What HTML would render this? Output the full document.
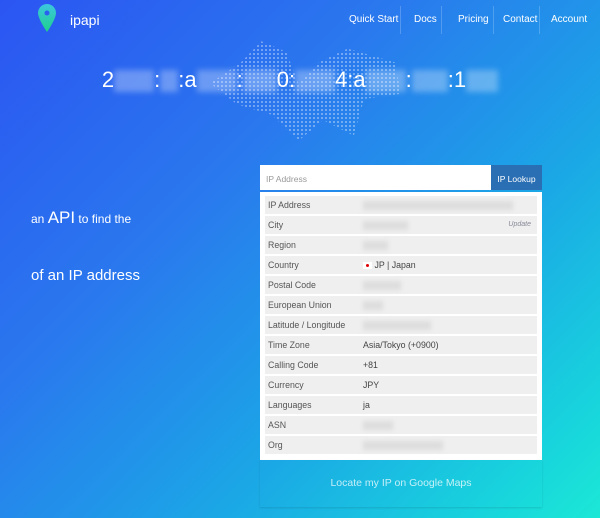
<!DOCTYPE html><html><head><style>
*{margin:0;padding:0;box-sizing:border-box}
body{width:600px;height:518px;overflow:hidden;font-family:"Liberation Sans",sans-serif;background:linear-gradient(135deg,#2b55f2 0%,#2a78ee 35%,#1ba6e6 65%,#18d6dc 90%,#1ce8d6 100%);position:relative;color:#fff}
.a{position:absolute}
.nav a{position:absolute;top:14px;font-size:10px;color:#fff;text-decoration:none}
.sep{position:absolute;top:6px;width:1px;height:28px;background:rgba(255,255,255,.2)}
.map{left:200px;top:36px;width:205px;height:105px;background-image:radial-gradient(circle,rgba(255,255,255,.4) 0.9px,transparent 1.2px);background-size:4px 4px;clip-path:polygon(5% 45%,20% 25%,30% 5%,42% 15%,48% 45%,58% 25%,72% 12%,95% 25%,98% 55%,80% 60%,75% 95%,60% 80%,48% 100%,35% 75%,18% 65%)}
.ip{left:0;width:600px;top:67px;text-align:center;font-size:22px}
.b{display:inline-block;width:40px;height:22px;background:rgba(255,255,255,.3);filter:blur(3px);vertical-align:middle}
.tbl{left:260px;top:192px;width:282px;height:268px;background:#fff;padding:4px 5px}
.row{height:18px;margin-bottom:2px;background:#efefef;font-size:8.8px;color:#555;position:relative;line-height:18px}
.row .l{position:absolute;left:3px}
.row .v{position:absolute;left:98px;color:#444}
.bl{display:inline-block;height:9px;background:#ddd;filter:blur(2px);vertical-align:middle}
</style></head><body>
<svg class="a" style="left:38px;top:4px" width="18" height="28" viewBox="0 0 18 28"><defs><linearGradient id="g" x1="0" y1="0" x2="0" y2="1"><stop offset="0" stop-color="#3cc6e0"/><stop offset="1" stop-color="#1ed08a"/></linearGradient></defs><path d="M9 0C4 0 0 4 0 9c0 6 9 19 9 19s9-13 9-19C18 4 14 0 9 0z" fill="url(#g)"/><circle cx="9" cy="9" r="2.5" fill="#2a5ef0"/></svg>
<div class="a" style="left:70px;top:12px;font-size:14px">ipapi</div>
<div class="nav"><a style="left:349px">Quick Start</a><a style="left:414px">Docs</a><a style="left:458px">Pricing</a><a style="left:503px">Contact</a><a style="left:551px">Account</a></div>
<div class="sep" style="left:400px"></div><div class="sep" style="left:441px"></div><div class="sep" style="left:493px"></div><div class="sep" style="left:539px"></div>
<div class="a map"></div>
<div class="a ip">2<span class="b"></span>:<span class="b" style="width:18px"></span>:a<span class="b"></span>:<span class="b" style="width:34px"></span>0:<span class="b"></span>4:a<span class="b"></span>:<span class="b" style="width:36px"></span>:1<span class="b" style="width:32px"></span></div>
<div class="a" style="left:31px;top:208px;font-size:12px">an <span style="font-size:17px">API</span> to find the</div>
<div class="a" style="left:31px;top:267px;font-size:15px">of an IP address</div>
<div class="a" style="left:260px;top:165px;width:231px;height:25px;background:#fff;font-size:8.5px;color:#999;padding:9px 6px">IP Address</div>
<div class="a" style="left:491px;top:165px;width:51px;height:25px;background:#2a6eb4;font-size:8.5px;padding:9px 0;text-align:center">IP Lookup</div>
<div class="a tbl">
<div class="row"><span class="l">IP Address</span><span class="v"><span class="bl" style="width:150px"></span></span></div>
<div class="row"><span class="l">City</span><span class="v"><span class="bl" style="width:45px"></span></span><span style="position:absolute;right:6px;font-size:7px;font-style:italic;color:#889">Update</span></div>
<div class="row"><span class="l">Region</span><span class="v"><span class="bl" style="width:25px"></span></span></div>
<div class="row"><span class="l">Country</span><span class="v"><span style="display:inline-block;width:9px;height:7px;background:#fff;vertical-align:middle;position:relative"><span style="position:absolute;left:3px;top:2px;width:3px;height:3px;border-radius:50%;background:#d00"></span></span> JP | Japan</span></div>
<div class="row"><span class="l">Postal Code</span><span class="v"><span class="bl" style="width:38px"></span></span></div>
<div class="row"><span class="l">European Union</span><span class="v"><span class="bl" style="width:20px"></span></span></div>
<div class="row"><span class="l">Latitude / Longitude</span><span class="v"><span class="bl" style="width:68px"></span></span></div>
<div class="row"><span class="l">Time Zone</span><span class="v">Asia/Tokyo (+0900)</span></div>
<div class="row"><span class="l">Calling Code</span><span class="v">+81</span></div>
<div class="row"><span class="l">Currency</span><span class="v">JPY</span></div>
<div class="row"><span class="l">Languages</span><span class="v">ja</span></div>
<div class="row"><span class="l">ASN</span><span class="v"><span class="bl" style="width:30px"></span></span></div>
<div class="row"><span class="l">Org</span><span class="v"><span class="bl" style="width:80px"></span></span></div>
</div>
<div class="a" style="left:260px;top:460px;width:282px;height:47px;box-shadow:0 1px 2px rgba(0,0,0,.12);font-size:10.5px;color:rgba(255,255,255,.75);text-align:center;line-height:46px">Locate my IP on Google Maps</div>
</body></html>
